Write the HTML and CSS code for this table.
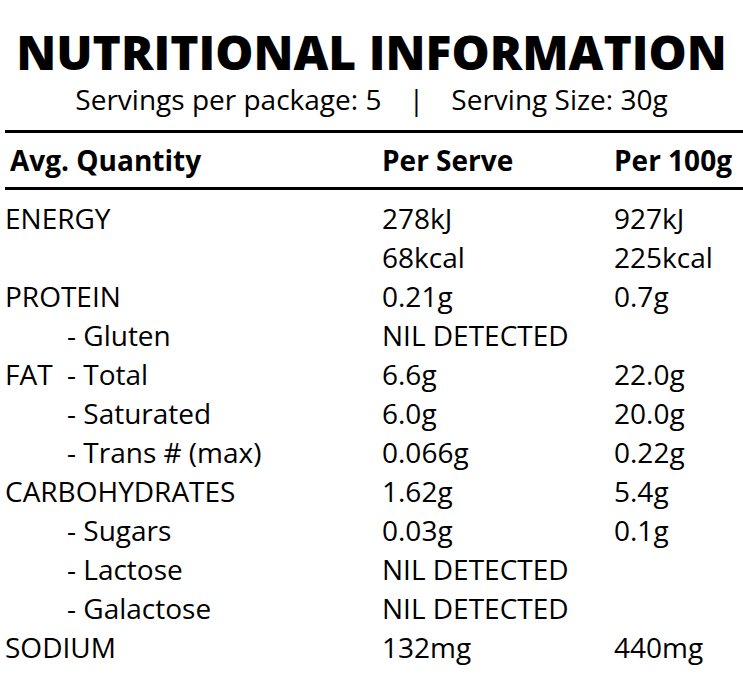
FILE: index.html
```html
<!DOCTYPE html>
<html>
<head>
<meta charset="utf-8">
<link rel="stylesheet" href="styles.css">
</head>
<body>
<div class="panel">
  <h1 class="title">NUTRITIONAL INFORMATION</h1>
  <p class="subtitle">Servings per package: 5 <span class="sep">|</span> Serving Size: 30g</p>
  <div class="table">
    <div class="head">
      <div class="h1">Avg. Quantity</div>
      <div>Per Serve</div>
      <div>Per 100g</div>
    </div>
    <div class="rows">
      <div class="row"><div>ENERGY</div><div>278kJ</div><div>927kJ</div></div>
      <div class="row"><div></div><div>68kcal</div><div>225kcal</div></div>
      <div class="row"><div>PROTEIN</div><div>0.21g</div><div>0.7g</div></div>
      <div class="row"><div class="sub">- Gluten</div><div>NIL DETECTED</div><div></div></div>
      <div class="row"><div><span class="fat">FAT</span>- Total</div><div>6.6g</div><div>22.0g</div></div>
      <div class="row"><div class="sub">- Saturated</div><div>6.0g</div><div>20.0g</div></div>
      <div class="row"><div class="sub">- Trans # (max)</div><div>0.066g</div><div>0.22g</div></div>
      <div class="row"><div>CARBOHYDRATES</div><div>1.62g</div><div>5.4g</div></div>
      <div class="row"><div class="sub">- Sugars</div><div>0.03g</div><div>0.1g</div></div>
      <div class="row"><div class="sub">- Lactose</div><div>NIL DETECTED</div><div></div></div>
      <div class="row"><div class="sub">- Galactose</div><div>NIL DETECTED</div><div></div></div>
      <div class="row"><div>SODIUM</div><div>132mg</div><div>440mg</div></div>
    </div>
  </div>
</div>
</body>
</html>
```

FILE: styles.css
```css
html, body {
  margin: 0;
  padding: 0;
  background: #fff;
}
body {
  font-family: "Open Sans", "DejaVu Sans", sans-serif;
  color: #000;
}
.panel {
  width: 743px;
  padding-top: 24px;
}
.title {
  margin: 0;
  text-align: center;
  font-weight: 800;
  font-size: 48px;
  line-height: 56px;
  white-space: nowrap;
}
.subtitle {
  margin: 0;
  text-align: center;
  font-size: 28px;
  line-height: 39px;
  white-space: nowrap;
}
.sep {
  margin: 0 20px;
}
.table {
  margin-top: 11px;
  margin-left: 5px;
}
.head {
  display: grid;
  grid-template-columns: 377px 232px 1fr;
  border-top: 3px solid #000;
  border-bottom: 3px solid #000;
  height: 54px;
  align-items: center;
  font-weight: 700;
  font-size: 28px;
  line-height: 39px;
}
.head .h1 {
  padding-left: 5px;
}
.rows {
  padding-top: 9px;
}
.row {
  display: grid;
  grid-template-columns: 377px 232px 1fr;
  font-size: 28px;
  line-height: 39px;
  white-space: nowrap;
}
.sub {
  padding-left: 62px;
}
.fat {
  display: inline-block;
  width: 62px;
}
```
